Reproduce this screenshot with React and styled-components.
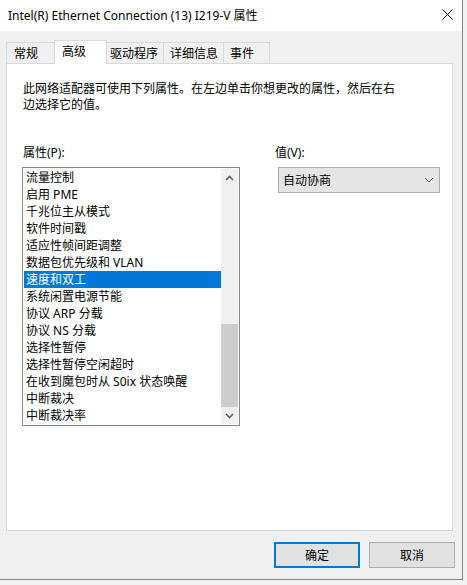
import React from 'react';
import styled, { createGlobalStyle } from 'styled-components';

const GlobalStyle = createGlobalStyle`
  html, body {
    margin: 0;
    padding: 0;
    background: #f2f2f2;
  }
  body {
    font-family: "Noto Sans", "Noto Sans CJK SC", sans-serif;
    font-size: 12px;
    color: #000;
  }
`;

const Window = styled.div`
  width: 463px;
  height: 580px;
  box-sizing: border-box;
  background: #f0f0f0;
  border-right: 1px solid #868686;
  border-bottom: 1px solid #868686;
  display: flex;
  flex-direction: column;
`;

const TitleBar = styled.div`
  height: 31px;
  flex: none;
  background: #fff;
  display: flex;
  align-items: center;
  justify-content: space-between;
  padding-left: 8px;
`;

const Title = styled.div`
  font-size: 12px;
  line-height: 16px;
  white-space: nowrap;
`;

const CloseButton = styled.div`
  width: 30px;
  height: 31px;
  display: flex;
  align-items: center;
  justify-content: center;
  padding-bottom: 2px;
  box-sizing: border-box;
`;

const TabStrip = styled.div`
  margin-top: 9px;
  height: 23px;
  padding-left: 6px;
  display: flex;
  align-items: flex-end;
  flex: none;
`;

const Tab = styled.div`
  width: ${p => p.$w}px;
  height: ${p => (p.$active ? 24 : 21)}px;
  margin-bottom: ${p => (p.$active ? -1 : 0)}px;
  margin-left: -1px;
  box-sizing: border-box;
  padding-left: ${p => p.$pl}px;
  padding-bottom: ${p => (p.$active ? 3 : 0)}px;
  border: 1px solid #d9d9d9;
  border-bottom: none;
  background: ${p => (p.$active ? '#fff' : '#f0f0f0')};
  position: relative;
  z-index: ${p => (p.$active ? 2 : 1)};
  display: flex;
  align-items: center;
  white-space: nowrap;
  &:first-child {
    margin-left: 0;
  }
`;

const Panel = styled.div`
  margin: 0 9px 0 6px;
  height: 468px;
  flex: none;
  box-sizing: border-box;
  border: 1px solid #d9d9d9;
  background: #fff;
  padding: 17px 15px 0 15px;
`;

const Intro = styled.p`
  margin: 0;
  line-height: 16px;
  padding-left: 1px;
`;

const Columns = styled.div`
  margin-top: 32px;
  display: flex;
  gap: 34px;
`;

const Column = styled.div`
  width: ${p => p.$w}px;
  display: flex;
  flex-direction: column;
`;

const FieldLabel = styled.div`
  line-height: 16px;
  height: 16px;
  margin-bottom: 6px;
  padding-left: 1px;
`;

const ListBox = styled.div`
  width: 218px;
  height: 259px;
  box-sizing: border-box;
  border: 1px solid #828790;
  padding: 1px;
  background: #fff;
  display: flex;
`;

const Items = styled.div`
  flex: 1;
  display: flex;
  flex-direction: column;
`;

const Item = styled.div`
  height: 17px;
  line-height: 17px;
  padding-left: 2px;
  white-space: nowrap;
  background: ${p => (p.$selected ? '#0078d7' : 'transparent')};
  color: ${p => (p.$selected ? '#fff' : '#000')};
`;

const ScrollBar = styled.div`
  width: 17px;
  background: #f0f0f0;
  display: flex;
  flex-direction: column;
`;

const ArrowButton = styled.div`
  height: 17px;
  flex: none;
  display: flex;
  align-items: center;
  justify-content: center;
`;

const Track = styled.div`
  flex: 1;
  display: flex;
  flex-direction: column;
  justify-content: flex-end;
`;

const Thumb = styled.div`
  height: 83px;
  background: #cdcdcd;
`;

const Select = styled.div`
  margin-left: 4px;
  width: 162px;
  height: 26px;
  box-sizing: border-box;
  border: 1px solid #adadad;
  background: #e5e5e5;
  display: flex;
  align-items: center;
  justify-content: space-between;
  padding: 0 5px 0 4px;
`;

const Footer = styled.div`
  margin-top: 11px;
  padding-right: 7px;
  display: flex;
  justify-content: flex-end;
  gap: 9px;
`;

const Button = styled.div`
  width: 86px;
  height: 26px;
  box-sizing: border-box;
  border: ${p => (p.$default ? '2px solid #0078d7' : '1px solid #adadad')};
  background: #e1e1e1;
  display: flex;
  align-items: center;
  justify-content: center;
`;

const Chevron = ({ up }) => (
  <svg width="9" height="6" viewBox="0 0 9 6">
    <path
      d={up ? 'M1 5 L4.5 1.5 L8 5' : 'M1 1 L4.5 4.5 L8 1'}
      stroke="#606060"
      strokeWidth="1.6"
      fill="none"
    />
  </svg>
);

const props = [
  '流量控制',
  '启用 PME',
  '千兆位主从模式',
  '软件时间戳',
  '适应性帧间距调整',
  '数据包优先级和 VLAN',
  '速度和双工',
  '系统闲置电源节能',
  '协议 ARP 分载',
  '协议 NS 分载',
  '选择性暂停',
  '选择性暂停空闲超时',
  '在收到魔包时从 S0ix 状态唤醒',
  '中断裁决',
  '中断裁决率',
];

const tabs = [
  { label: '常规', w: 49, pl: 7 },
  { label: '高级', w: 53, pl: 7, active: true },
  { label: '驱动程序', w: 58, pl: 3 },
  { label: '详细信息', w: 61, pl: 6 },
  { label: '事件', w: 47, pl: 6 },
];

export default function App() {
  return (
    <>
      <GlobalStyle />
      <Window>
        <TitleBar>
          <Title>Intel(R) Ethernet Connection (13) I219-V 属性</Title>
          <CloseButton>
            <svg width="11" height="11" viewBox="0 0 11 11">
              <path d="M0.5 0.5 L10.5 10.5 M10.5 0.5 L0.5 10.5" stroke="#000" strokeWidth="1" />
            </svg>
          </CloseButton>
        </TitleBar>

        <TabStrip>
          {tabs.map(t => (
            <Tab key={t.label} $w={t.w} $pl={t.pl} $active={t.active}>{t.label}</Tab>
          ))}
        </TabStrip>

        <Panel>
          <Intro>
            此网络适配器可使用下列属性。在左边单击你想更改的属性，然后在右
            <br />
            边选择它的值。
          </Intro>
          <Columns>
            <Column $w={218}>
              <FieldLabel>属性(P):</FieldLabel>
              <ListBox>
                <Items>
                  {props.map((p, i) => (
                    <Item key={p} $selected={i === 6}>{p}</Item>
                  ))}
                </Items>
                <ScrollBar>
                  <ArrowButton><Chevron up /></ArrowButton>
                  <Track><Thumb /></Track>
                  <ArrowButton><Chevron /></ArrowButton>
                </ScrollBar>
              </ListBox>
            </Column>
            <Column $w={170}>
              <FieldLabel>值(V):</FieldLabel>
              <Select>
                <span>自动协商</span>
                <svg width="10" height="6" viewBox="0 0 10 6">
                  <path d="M1 1 L5 5 L9 1" stroke="#5a5a5a" strokeWidth="1" fill="none" />
                </svg>
              </Select>
            </Column>
          </Columns>
        </Panel>

        <Footer>
          <Button $default>确定</Button>
          <Button>取消</Button>
        </Footer>
      </Window>
    </>
  );
}
